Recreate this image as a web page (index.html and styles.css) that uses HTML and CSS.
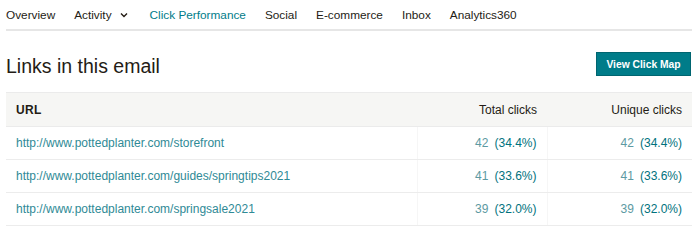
FILE: index.html
```html
<!DOCTYPE html>
<html>
<head>
<meta charset="utf-8">
<link rel="stylesheet" href="styles.css">
</head>
<body>
<div class="page">
  <nav class="tabs">
    <span class="tab">Overview</span>
    <span class="tab">Activity <svg class="chev" width="8" height="6" viewBox="0 0 8 6"><path d="M1 1.5 L4 4.5 L7 1.5" fill="none" stroke="#241c15" stroke-width="1.4"/></svg></span>
    <span class="tab active">Click Performance</span>
    <span class="tab">Social</span>
    <span class="tab">E-commerce</span>
    <span class="tab">Inbox</span>
    <span class="tab">Analytics360</span>
  </nav>
  <div class="head">
    <h1>Links in this email</h1>
    <button class="btn">View Click Map</button>
  </div>
  <table class="links">
    <thead>
      <tr><th class="url">URL</th><th class="num">Total clicks</th><th class="num">Unique clicks</th></tr>
    </thead>
    <tbody>
      <tr><td class="url">http://www.pottedplanter.com/storefront</td><td class="num"><span class="n">42</span><span class="p">(34.4%)</span></td><td class="num"><span class="n">42</span><span class="p">(34.4%)</span></td></tr>
      <tr><td class="url">http://www.pottedplanter.com/guides/springtips2021</td><td class="num"><span class="n">41</span><span class="p">(33.6%)</span></td><td class="num"><span class="n">41</span><span class="p">(33.6%)</span></td></tr>
      <tr><td class="url">http://www.pottedplanter.com/springsale2021</td><td class="num"><span class="n">39</span><span class="p">(32.0%)</span></td><td class="num"><span class="n">39</span><span class="p">(32.0%)</span></td></tr>
    </tbody>
  </table>
</div>
</body>
</html>
```
FILE: styles.css
```css
* { box-sizing: border-box; }
body {
  margin: 0;
  background: #fff;
  font-family: "Liberation Sans", Arial, sans-serif;
  color: #241c15;
}
.page { padding: 0 8px 0 6px; }
.tabs {
  display: flex;
  gap: 19px;
  height: 31px;
  align-items: center;
  border-bottom: 2px solid #e6e6e6;
  font-size: 11.8px;
  padding-top: 1px;
}
.tab { display: flex; align-items: center; gap: 7px; }
.tab.active { color: #007c89; }
.chev { margin-left: 1px; margin-right: 3px; }
.head {
  display: flex;
  justify-content: space-between;
  align-items: flex-start;
  height: 61px;
}
h1 {
  margin: 23px 0 0;
  line-height: 24px;
  font-size: 19.5px;
  font-weight: 300;
  color: #241c15;
}
.btn {
  background: #007c89;
  color: #fff;
  border: 1px solid #006570;
  font-family: inherit;
  font-weight: bold;
  font-size: 10.3px;
  height: 24px;
  width: 95px;
  padding: 0;
  margin: 21px 1px 0 0;
}
.links {
  width: 100%;
  border-collapse: collapse;
  font-size: 12px;
}
.links th {
  background: #f6f6f4;
  font-weight: normal;
  height: 34px;
  border-top: 1px solid #ebebeb;
  border-bottom: 1px solid #ebebeb;
  color: #241c15;
}
.links th.url { font-weight: bold; letter-spacing: 0.3px; }
.links td {
  height: 33px;
  border-bottom: 1px solid #ececec;
}
.url { text-align: left; padding-left: 10px; }
td.url { color: #2f8a96; }
.num { text-align: right; padding-right: 10px; }
.links td.num { border-left: 1px solid #f6f6f6; }
.links th:nth-child(2) { width: 130px; }
.links th:nth-child(3) { width: 145px; }
.n { color: #5d9aa2; margin-right: 6px; }
.p { color: #00727d; }
```
